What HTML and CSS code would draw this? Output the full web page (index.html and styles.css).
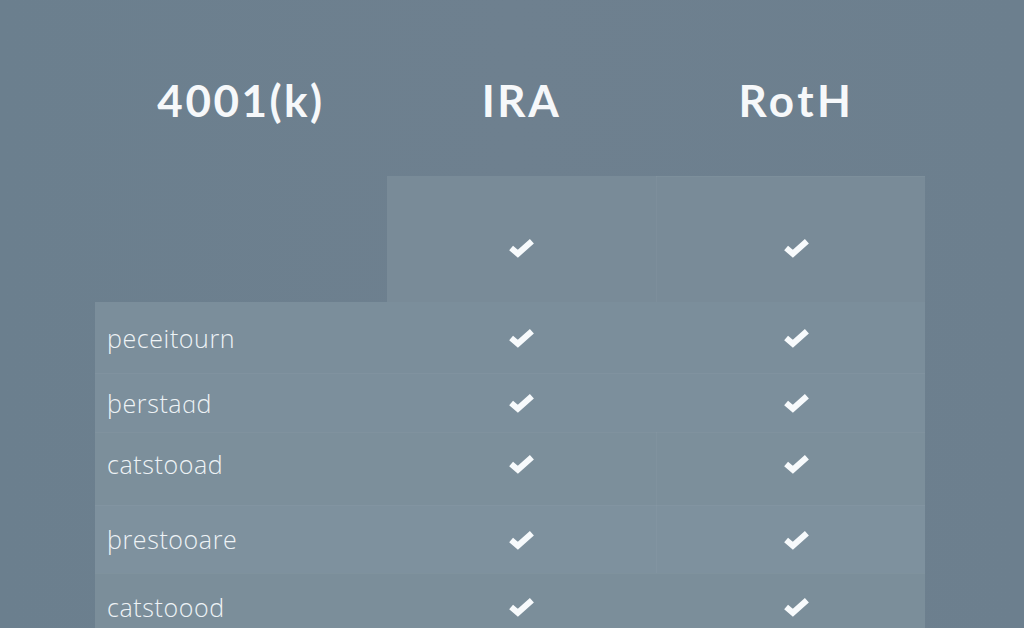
FILE: index.html
```html
<!DOCTYPE html>
<html lang="en">
<head>
<meta charset="utf-8">
<title>Retirement accounts comparison</title>
<link rel="stylesheet" href="styles.css">
</head>
<body>
<main class="page">
  <div class="compare">
    <div class="head label-col">4001(k)</div>
    <div class="head">IRA</div>
    <div class="head roth">RotH</div>

    <div class="cell blank r0"></div>
    <div class="cell panel r0"><svg class="check" viewBox="0 0 26 20"><path d="M3 10.5 L9.5 16 L23 4"/></svg></div>
    <div class="cell panel r0 roth divl"><svg class="check" viewBox="0 0 26 20"><path d="M3 10.5 L9.5 16 L23 4"/></svg></div>

    <div class="cell panel label r1">peceitourn</div>
    <div class="cell panel r1"><svg class="check" viewBox="0 0 26 20"><path d="M3 10.5 L9.5 16 L23 4"/></svg></div>
    <div class="cell panel r1 roth"><svg class="check" viewBox="0 0 26 20"><path d="M3 10.5 L9.5 16 L23 4"/></svg></div>

    <div class="cell panel label r2 sep">þerstaɑd</div>
    <div class="cell panel r2 sep"><svg class="check" viewBox="0 0 26 20"><path d="M3 10.5 L9.5 16 L23 4"/></svg></div>
    <div class="cell panel r2 roth sep"><svg class="check" viewBox="0 0 26 20"><path d="M3 10.5 L9.5 16 L23 4"/></svg></div>

    <div class="cell panel label r3 sep">catstooad</div>
    <div class="cell panel r3 sep"><svg class="check" viewBox="0 0 26 20"><path d="M3 10.5 L9.5 16 L23 4"/></svg></div>
    <div class="cell panel r3 roth sep divl"><svg class="check" viewBox="0 0 26 20"><path d="M3 10.5 L9.5 16 L23 4"/></svg></div>

    <div class="cell panel label r4 sep">þrestooare</div>
    <div class="cell panel r4 sep"><svg class="check" viewBox="0 0 26 20"><path d="M3 10.5 L9.5 16 L23 4"/></svg></div>
    <div class="cell panel r4 roth sep divl"><svg class="check" viewBox="0 0 26 20"><path d="M3 10.5 L9.5 16 L23 4"/></svg></div>

    <div class="cell panel label r5 sep">catstoood</div>
    <div class="cell panel r5 sep"><svg class="check" viewBox="0 0 26 20"><path d="M3 10.5 L9.5 16 L23 4"/></svg></div>
    <div class="cell panel r5 roth sep"><svg class="check" viewBox="0 0 26 20"><path d="M3 10.5 L9.5 16 L23 4"/></svg></div>
  </div>
</main>
</body>
</html>
```

FILE: styles.css
```css
html, body {
  margin: 0;
  padding: 0;
}
body {
  width: 1024px;
  height: 628px;
  overflow: hidden;
  background: linear-gradient(90deg, #6b7f8e 0%, #6e808f 50%, #6c7f8e 100%);
  font-family: "Lato", "Open Sans", sans-serif;
  color: #f4f7f9;
}
.page {
  padding-left: 95px;
}
.compare {
  display: grid;
  grid-template-columns: 292px 269px 269px;
  grid-template-rows: 176px 126px 71px 59px 73px 68px 67px;
}
.head {
  display: flex;
  justify-content: center;
  align-items: flex-start;
  padding-top: 73px;
  font-weight: 700;
  font-size: 44px;
  line-height: 54px;
  letter-spacing: 2.5px;
  color: #f6f8fa;
}
.head.roth {
  padding-left: 12px;
  letter-spacing: 3.5px;
}
.cell {
  display: flex;
  align-items: center;
  justify-content: center;
}
.panel {
  background: #7a8c99;
}
.r0 { padding-top: 16px; background-color: #798b98; }
.r0.blank { background: transparent; }
.r1 { background-color: #7b8e9b; }
.r2 { background-color: #7c8f9c; }
.r3 { background-color: #7c8f9b; padding-bottom: 10px; }
.r4 { background-color: #7e919e; }
.r5 { background-color: #7b8e9a; }
.sep {
  box-shadow: inset 0 1px 0 rgba(255, 255, 255, 0.035);
}
.roth {
  padding-left: 12px;
}
.divl {
  box-shadow: inset 1px 0 0 rgba(255, 255, 255, 0.03), inset 0 1px 0 rgba(255, 255, 255, 0.035);
}
.label {
  justify-content: flex-start;
  padding-left: 12px;
  font-family: "Open Sans", "Lato", sans-serif;
  font-weight: 300;
  font-size: 25px;
  color: #eef3f6;
  letter-spacing: 0.6px;
}
.check {
  width: 27px;
  height: 21px;
  fill: none;
  stroke: #f7fafc;
  stroke-width: 5.8;
  stroke-linejoin: miter;
  stroke-linecap: butt;
}
```
